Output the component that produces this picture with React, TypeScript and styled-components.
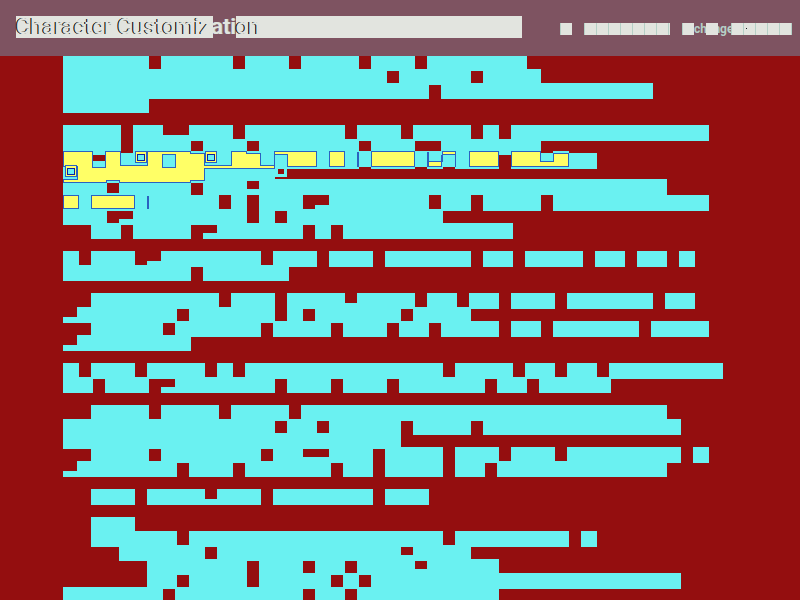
import React from "react";
import styled, { createGlobalStyle } from "styled-components";

const CYAN = "#6af1f1";
const RED = "#940e0f";
const PLUM = "#7e5361";
const PAPER = "#e2e4df";
const MINT = "#b5cfc6";
const INK = "#16181a";
const YELLOW = "#ffff66";
const BLUE = "#2b62c0";
const NAVY = "#0d1fa0";

const GlobalStyle = createGlobalStyle`
  * { box-sizing: border-box; }
  body { margin: 0; background: ${RED}; font-family: Roboto, "Liberation Sans", sans-serif; }
`;

const Page = styled.div`
  height: 100vh;
  display: flex;
  flex-direction: column;
  overflow: hidden;
`;

const Header = styled.header`
  flex: none;
  height: 56px;
  display: flex;
  align-items: center;
  justify-content: space-between;
  padding: 0 8px 2px 16px;
  background: ${PLUM};
`;

const Title = styled.h1`
  flex: 0 1 506px;
  height: 22px;
  margin: 0;
  background: ${PAPER};
  color: ${PAPER};
  font-size: 22px;
  font-weight: 500;
  line-height: 22px;
  text-shadow: -1px 0 ${INK}, -1px 0 ${INK};
  white-space: nowrap;
`;

const Marked = styled.span`
  display: inline-block;
  height: 22px;
  background: linear-gradient(90deg, ${PAPER} 2px, ${PLUM} 2px);
  text-shadow: 1px 0 ${MINT};
`;

const Nav = styled.nav`
  display: flex;
  align-items: center;
  padding-top: 4px;
`;

const Blocks = styled.span<{ $count: number; $gap?: boolean }>`
  position: relative;
  width: ${(p) => Math.round(p.$count * 12.25)}px;
  height: 12px;
  margin-right: ${(p) => (p.$gap ? 12 : 0)}px;
  background: repeating-linear-gradient(90deg, ${MINT} 0 1px, ${PAPER} 1px 12px);
`;

const Dot = styled.i`
  position: absolute;
  left: 15px;
  top: 5px;
  width: 1px;
  height: 1px;
  background: ${INK};
`;

const ChangeLink = styled.a`
  position: relative;
  width: 37px;
  height: 12px;
  color: ${MINT};
  font-size: 12px;
  font-weight: 700;
  line-height: 12px;
  text-decoration: none;

  &::after {
    content: "";
    position: absolute;
    left: 12px;
    top: 0;
    width: 12px;
    height: 12px;
    background: ${PAPER};
  }
`;

const Main = styled.main`
  flex: 1;
  min-height: 0;
  overflow: hidden;
`;

const Mosaic = styled.svg`
  display: block;
`;

type Row = {
  row: number;
  from: number;
  to: number;
  holes?: number[];
  low?: number[];
};

const rows: Row[] = [
  { row: 0, from: 0, to: 32, holes: [6, 12, 16, 21, 25] },
  { row: 1, from: 0, to: 33, holes: [23, 29] },
  { row: 2, from: 0, to: 41, holes: [26] },
  { row: 3, from: 0, to: 5 },
  { row: 5, from: 0, to: 45, holes: [4, 12, 20, 24, 29, 31], low: [7, 8] },
  { row: 6, from: 0, to: 33, holes: [4, 9, 13, 21, 25, 26] },
  { row: 7, from: 0, to: 37, holes: [2, 21, 25, 27, 31] },
  { row: 8, from: 0, to: 14 },
  { row: 9, from: 0, to: 42, holes: [3, 9], low: [13] },
  { row: 10, from: 0, to: 45, holes: [11, 13, 17, 26, 29, 34], low: [18] },
  { row: 11, from: 0, to: 26, holes: [3, 13, 15], low: [4] },
  { row: 12, from: 2, to: 31, holes: [4, 9, 17, 19], low: [10] },
  { row: 14, from: 0, to: 44, holes: [1, 5, 14, 18, 22, 29, 32, 37, 40, 43], low: [6] },
  { row: 15, from: 0, to: 15, holes: [9] },
  { row: 17, from: 2, to: 44, holes: [11, 15, 25, 28, 31, 35, 42], low: [20] },
  { row: 18, from: 0, to: 28, holes: [8, 15, 17, 24], low: [0] },
  { row: 19, from: 2, to: 45, holes: [7, 14, 19, 23, 26, 31, 34, 41] },
  { row: 20, from: 0, to: 8, low: [0] },
  { row: 22, from: 0, to: 46, holes: [1, 5, 10, 12, 27, 32, 35, 38] },
  { row: 23, from: 0, to: 38, holes: [2, 6, 15, 19, 23, 30, 33], low: [7] },
  { row: 25, from: 2, to: 42, holes: [6, 11, 16] },
  { row: 26, from: 0, to: 43, holes: [15, 18, 24, 29] },
  { row: 27, from: 0, to: 23 },
  { row: 28, from: 2, to: 45, holes: [6, 14, 22, 27, 31, 35, 44], low: [17, 18] },
  { row: 29, from: 0, to: 42, holes: [8, 12, 19, 22, 27, 30], low: [0] },
  { row: 31, from: 2, to: 25, holes: [5, 14, 22], low: [10] },
  { row: 33, from: 2, to: 4 },
  { row: 34, from: 2, to: 37, holes: [8, 27, 36] },
  { row: 35, from: 4, to: 28, holes: [10], low: [24] },
  { row: 36, from: 6, to: 30, holes: [13, 17, 20], low: [25] },
  { row: 37, from: 6, to: 43, holes: [8, 13, 19, 21] },
  { row: 38, from: 0, to: 30, holes: [7, 17, 20] },
];

const PITCH = 14;
const CELL = 16;
const LEFT = 63;

function mosaicPath() {
  let d = "";
  for (const { row, from, to, holes = [], low = [] } of rows) {
    const top = 55 + row * PITCH - (row === 9 ? 2 : 0);
    for (let col = from; col <= to; col++) {
      if (holes.includes(col)) continue;
      const drop = low.includes(col) ? 10 : 0;
      d += `M${LEFT + col * PITCH} ${top + drop}h${CELL}v${CELL - drop}h-${CELL}z`;
    }
  }
  return d;
}

const boxes = [
  { x: 65, y: 165 },
  { x: 135, y: 151 },
  { x: 205, y: 151 },
];

const outlines = [
  "M63 151H92V167H105V151H120V165H147V151H190V153H204V165H231V151H246V153H260V165H274V168H204V180H190V182H119V180H106V182H63V179H77V166H63Z",
  "M274 151H316V166H287V154H274Z",
  "M329 151H344V166H329Z",
  "M371 151H414V166H371Z",
  "M428 161H441V166H428Z",
  "M442 151H455V154H442Z",
  "M469 151H498V166H469Z",
  "M511 151H540V161H553V153H568V166H511Z",
  "M63 195H78V208H63Z",
  "M91 195H134V208H91Z",
];

function Artwork() {
  return (
    <Mosaic width="800" height="544" viewBox="0 56 800 544" shapeRendering="crispEdges" aria-hidden="true">
      <path d={mosaicPath()} fill={CYAN} />
      <path
        fill={CYAN}
        d="M63 151H121V153H133V151H499V167H63ZM91 193H149V209H91ZM275 167H287V177H275ZM553 151H569V167H553Z"
      />
      <path fill={RED} d="M93 155H105V161H93ZM278 169H284V174H278ZM247 181H259V189H247ZM275 177H287V179H275Z" />
      <g transform="translate(.5 .5)" fill={YELLOW} stroke={BLUE}>
        {outlines.map((d) => (
          <path key={d} d={d} />
        ))}
        <path d="M162 154H175V167H162Z" fill={CYAN} />
        <path
          d="M274 154V168M427 151V166M428 151V166M441 154V161M442 154V161M455 151V166M357 151V166M358 151V166M147 195V208M148 195V208"
          fill="none"
        />
        {boxes.map(({ x, y }) => (
          <g key={x}>
            <rect x={x} y={y} width="11" height="11" />
            <rect x={x + 2} y={y + 3} width="7" height="6" fill={CYAN} stroke={NAVY} />
          </g>
        ))}
      </g>
    </Mosaic>
  );
}

export default function App() {
  return (
    <Page>
      <GlobalStyle />
      <Header>
        <Title>
          Character Customiz<Marked>ati</Marked>on
        </Title>
        <Nav>
          <Blocks $count={1} $gap />
          <Blocks $count={7} $gap />
          <Blocks $count={1} />
          <ChangeLink href="#change">change</ChangeLink>
          <Blocks $count={5}>
            <Dot />
          </Blocks>
        </Nav>
      </Header>
      <Main>
        <Artwork />
      </Main>
    </Page>
  );
}
